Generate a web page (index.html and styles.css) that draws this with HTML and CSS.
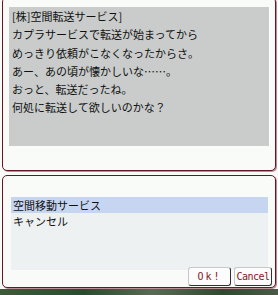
FILE: index.html
```html
<!DOCTYPE html>
<html lang="ja">
<head>
    <meta charset="UTF-8">
    <title>空間転送サービス</title>
    <link rel="stylesheet" href="styles.css">
</head>
<body>
    <!-- NPC message -->
    <div class="dialog message">
        <div class="message-text">
            <p>[株]空間転送サービス]</p>
            <p>カプラサービスで転送が始まってから</p>
            <p>めっきり依頼がこなくなったからさ。</p>
            <p>あー、あの頃が懐かしいな……。</p>
            <p>おっと、転送だったね。</p>
            <p>何処に転送して欲しいのかな？</p>
        </div>
    </div>

    <!-- Menu choice -->
    <div class="dialog menu">
        <ul class="choices">
            <li class="selected">空間移動サービス</li>
            <li>キャンセル</li>
        </ul>
        <div class="buttons">
            <button class="btn btn-ok">Ok!</button>
            <button class="btn btn-cancel">Cancel</button>
        </div>
    </div>

    <div class="scene"></div>
</body>
</html>
```

FILE: styles.css
```css
/* Basic Styles */
body {
    margin: 0;
    padding: 0;
    width: 278px;
    height: 295px;
    overflow: hidden;
    background: #f9fbf9;
    font-family: "Noto Sans CJK JP", "DejaVu Sans", sans-serif;
    font-size: 11px;
    color: #101010;
}

.dialog {
    margin: 0 2px;
    background: #f8fbf8;
    border: 1px solid #6a1424;
    border-radius: 5px;
    box-shadow: 1px 1px 0 #b89098;
}

.message {
    margin-top: -3px;
    height: 174px;
    padding-top: 9px;
    box-sizing: border-box;
}

.message-text {
    margin: 0 5px 0 6px;
    height: 139px;
    padding: 0 3px;
    background: #c9cccb;
    border-right: 1px solid #ffffff;
}

.message-text p {
    margin: 0;
    line-height: 18.3px;
}

.menu {
    margin-top: 4px;
    height: 113px;
    box-sizing: border-box;
    padding-top: 21px;
}

.choices {
    list-style: none;
    margin: 0 7px 0 8px;
    padding: 0;
    height: 73px;
    background: #eef1f2;
}

.choices li {
    padding-left: 2px;
    height: 16px;
    line-height: 16px;
}

.choices .selected {
    background: #c6d6f0;
}

.buttons {
    display: flex;
    justify-content: flex-end;
    gap: 3px;
    margin-top: -3px;
    padding-right: 3px;
}

.btn {
    height: 19px;
    padding: 0;
    font-family: "DejaVu Sans Mono", monospace;
    font-size: 10px;
    color: #8a1626;
    background: #fbfcfb;
    border: 1px solid #303030;
    border-top-color: #c8c8c8;
    border-left-color: #c8c8c8;
    border-radius: 3px;
}

.btn-ok {
    width: 43px;
    letter-spacing: 2px;
}

.btn-cancel {
    width: 38px;
    letter-spacing: -0.5px;
}

.scene {
    margin-top: 1px;
    height: 6px;
    background: linear-gradient(90deg, #3e5a3a, #2c4a2e 30%, #5a6a52 55%, #31482f 80%, #4a5a46);
}
```
